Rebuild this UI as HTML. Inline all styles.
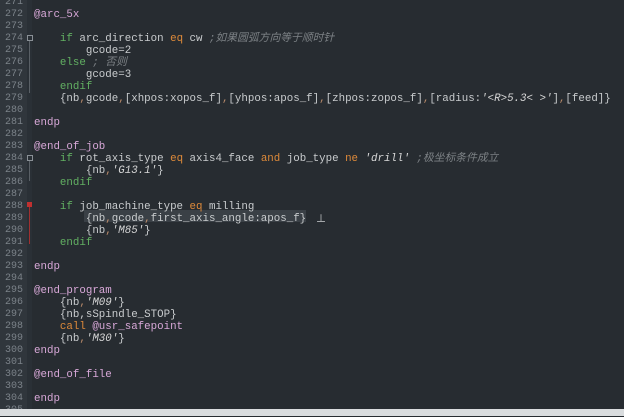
<!DOCTYPE html>
<html><head><meta charset="utf-8"><style>
body{margin:0;width:624px;height:416px;overflow:hidden;background:#272c31;position:relative;font-family:"Liberation Mono","Noto Sans CJK SC",monospace;font-size:10.8px;}
#g{position:absolute;left:0;top:0;width:27px;height:416px;background:#30363c;}
#f{position:absolute;left:27px;top:0;width:5px;height:416px;background:#2a3036;}
.l{position:absolute;left:0;height:12px;line-height:12px;white-space:pre;color:#c9ccce;}
.n{position:absolute;left:1px;width:22px;text-align:right;color:#7b8289;font-size:10px;height:12px;line-height:12px;}
.a{color:#d8a8d8}.k{color:#62b062}.o{color:#de8a3a}.c{color:#7c8185;font-style:italic}.s{font-style:italic;color:#d8d8d8}.p{color:#b88a6a}
#bar{position:absolute;left:0;top:409px;width:624px;height:7px;background:#d9dcde;}
</style></head><body>
<div id="g"></div><div id="f"></div>
<div style="position:absolute;left:84px;top:210px;width:222px;height:12px;background:#3a4046;"></div>
<div style="position:absolute;left:27px;top:202px;width:5px;height:5px;background:#c03030"></div>
<div style="position:absolute;left:29px;top:207px;width:1px;height:37px;background:#a03030"></div>
<div style="position:absolute;left:27px;top:35px;width:4px;height:4px;border:1px solid #8a9096"></div>
<div style="position:absolute;left:29px;top:41px;width:1px;height:52px;background:#5a6066"></div>
<div style="position:absolute;left:27px;top:155px;width:4px;height:4px;border:1px solid #8a9096"></div>
<div style="position:absolute;left:29px;top:161px;width:1px;height:20px;background:#5a6066"></div>
<div id="lines"></div>
<script>
var L={271:'',272:'<span class="a">@arc_5x</span>',273:'',
274:'    <span class="k">if</span> arc_direction <span class="o">eq</span> cw <span class="c">;如果圆弧方向等于顺时针</span>',
275:'        gcode=2',276:'    <span class="k">else</span> <span class="c">; 否则</span>',277:'        gcode=3',278:'    <span class="k">endif</span>',
279:'    {nb<span class="p">,</span>gcode<span class="p">,</span>[xhpos:xopos_f]<span class="p">,</span>[yhpos:apos_f]<span class="p">,</span>[zhpos:zopos_f]<span class="p">,</span>[radius:<span class="s">\'&lt;R&gt;5.3&lt; &gt;\'</span>]<span class="p">,</span>[feed]}',
280:'',281:'<span class="a">endp</span>',282:'',283:'<span class="a">@end_of_job</span>',
284:'    <span class="k">if</span> rot_axis_type <span class="o">eq</span> axis4_face <span class="o">and</span> job_type <span class="o">ne</span> <span class="s">\'drill\'</span> <span class="c">;极坐标条件成立</span>',
285:'        {nb<span class="p">,</span><span class="s">\'G13.1\'</span>}',286:'    <span class="k">endif</span>',287:'',
288:'    <span class="k">if</span> job_machine_type <span class="o">eq</span> milling',
289:'        {nb<span class="p">,</span>gcode<span class="p">,</span>first_axis_angle:apos_f}',
290:'        {nb<span class="p">,</span><span class="s">\'M85\'</span>}',291:'    <span class="k">endif</span>',292:'',293:'<span class="a">endp</span>',294:'',
295:'<span class="a">@end_program</span>',296:'    {nb<span class="p">,</span><span class="s">\'M09\'</span>}',297:'    {nb,sSpindle_STOP}',
298:'    <span class="o">call</span> <span class="a">@usr_safepoint</span>',299:'    {nb<span class="p">,</span><span class="s">\'M30\'</span>}',300:'<span class="a">endp</span>',301:'',
302:'<span class="a">@end_of_file</span>',303:'',304:'<span class="a">endp</span>',305:''};
var h='';for(var n=271;n<=305;n++){var t=(n-271)*12-3;h+='<div class="n" style="top:'+t+'px">'+n+'</div><div class="l" style="left:34px;top:'+t+'px">'+L[n]+'</div>';}
document.getElementById('lines').innerHTML=h;
</script>
<div style="position:absolute;left:316px;top:210px;color:#c9ccce;font-size:10px">⊥</div>
<div id="bar"></div>
</body></html>
